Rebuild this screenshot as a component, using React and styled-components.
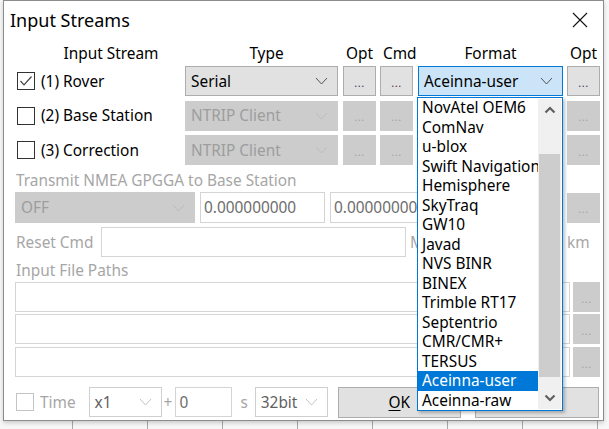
import styled, { createGlobalStyle } from "styled-components"

const GlobalStyle = createGlobalStyle`
  body {
    margin: 0;
    font-family: "Noto Sans", "Open Sans", sans-serif;
    font-size: 15.4px;
    color: #000;
  }
`

const Screen = styled.div`
  width: 609px;
  height: 429px;
  overflow: hidden;
  background-color: #f7f7f7;
  background-image: linear-gradient(to right, #a9a9a9 1px, transparent 1px);
  background-size: 75px 100%;
  background-position: 72px 0;
`

const Dialog = styled.div`
  position: relative;
  margin-left: 3px;
  width: 601px;
  height: 421px;
  box-sizing: border-box;
  border: 1px solid #8c8c8c;
  background: #fff;
  box-shadow: 0 2px 4px rgba(0, 0, 0, 0.18);
`

const TitleBar = styled.div`
  height: 38px;
  display: flex;
  align-items: center;
  justify-content: space-between;
  padding: 0 15px 0 6px;
`

const Title = styled.div`
  font-size: 18px;
`

const Body = styled.div`
  padding-left: 11px;
`

const Row = styled.div`
  display: flex;
  align-items: center;
  height: ${(p) => p.$h || 30}px;
  margin-top: ${(p) => p.$mt || 0}px;
`

const HeadCell = styled.div`
  width: ${(p) => p.$w}px;
  margin-left: ${(p) => p.$ml || 0}px;
  padding-left: ${(p) => p.$pl || 0}px;
  box-sizing: border-box;
  text-align: center;
  white-space: nowrap;
`

const StreamCell = styled.div`
  width: 170px;
  display: flex;
  align-items: center;
  gap: 6px;
  padding-left: 2px;
  box-sizing: border-box;
  white-space: nowrap;
`

const Check = styled.div`
  width: 18px;
  height: 18px;
  margin-left: ${(p) => p.$ml || 0}px;
  box-sizing: border-box;
  border: 1px solid ${(p) => (p.$off ? "#c4c4c4" : "#333")};
  background: #fff;
  display: flex;
  align-items: center;
  justify-content: center;
  flex: none;
`

const Combo = styled.div`
  width: ${(p) => p.$w}px;
  height: ${(p) => p.$h || 30}px;
  margin-left: ${(p) => p.$ml || 0}px;
  box-sizing: border-box;
  display: flex;
  align-items: center;
  justify-content: space-between;
  padding: 0 9px 0 5px;
  flex: none;
  white-space: nowrap;
  overflow: hidden;
  border: 1px solid
    ${(p) =>
      p.$focus ? "#0078d7" : p.$tone === "off" ? "#cccccc" : p.$tone === "flat" ? "#cfcfcf" : "#adadad"};
  background: ${(p) =>
    p.$focus ? "#cce4f7" : p.$tone === "off" ? "#cccccc" : p.$tone === "flat" ? "#fff" : "#e1e1e1"};
  color: ${(p) => (p.$tone === "off" ? "#9d9d9d" : p.$tone === "flat" ? "#5f5f5f" : "#000")};
`

const Dots = styled.div`
  width: ${(p) => p.$w || 33}px;
  height: ${(p) => p.$h || 30}px;
  margin-left: ${(p) => p.$ml || 0}px;
  box-sizing: border-box;
  flex: none;
  display: flex;
  align-items: center;
  justify-content: center;
  font-size: 11px;
  letter-spacing: 0.5px;
  padding-top: 2px;
  border: 1px solid ${(p) => (p.$off ? "#cccccc" : "#adadad")};
  background: ${(p) => (p.$off ? "#cccccc" : "#e1e1e1")};
  color: ${(p) => (p.$off ? "#a3a3a3" : "#4a2a55")};
`

const Edit = styled.div`
  width: ${(p) => p.$w}px;
  height: ${(p) => p.$h || 30}px;
  margin-left: ${(p) => p.$ml || 0}px;
  box-sizing: border-box;
  flex: none;
  display: flex;
  align-items: center;
  padding-left: 3px;
  overflow: hidden;
  white-space: nowrap;
  border: 1px solid #d4d4d4;
  background: #fff;
  color: #6d6d6d;
`

const Label = styled.div`
  margin-left: ${(p) => p.$ml || 0}px;
  width: ${(p) => (p.$w ? `${p.$w}px` : "auto")};
  flex: none;
  overflow: hidden;
  white-space: nowrap;
  color: ${(p) => (p.$on ? "#000" : "#a6a6a6")};
`

const Button = styled.div`
  width: ${(p) => p.$w}px;
  height: 31px;
  margin-left: ${(p) => p.$ml || 0}px;
  box-sizing: border-box;
  flex: none;
  display: flex;
  align-items: center;
  justify-content: center;
  border: 1px solid #adadad;
  background: #e1e1e1;

  u {
    text-underline-offset: 2px;
  }
`

const Dropdown = styled.div`
  position: absolute;
  left: 413px;
  top: 96px;
  width: 146px;
  height: 314px;
  box-sizing: border-box;
  border: 1px solid #0078d7;
  background: #fff;
  display: flex;
  box-shadow: 2px 2px 3px rgba(0, 0, 0, 0.25);
`

const List = styled.div`
  flex: 1;
  min-width: 0;
  display: flex;
  flex-direction: column;
`

const Item = styled.div`
  height: 19.5px;
  line-height: 19.5px;
  padding-left: 4px;
  white-space: nowrap;
  overflow: hidden;
  background: ${(p) => (p.$sel ? "#0078d7" : "transparent")};
  color: ${(p) => (p.$sel ? "#fff" : "#000")};
`

const ScrollBar = styled.div`
  width: 23px;
  margin: 1px 1px 1px 0;
  background: #f0f0f0;
  display: flex;
  flex-direction: column;
  flex: none;
`

const ArrowBox = styled.div`
  height: 22px;
  display: flex;
  align-items: center;
  justify-content: center;
  flex: none;
`

const Track = styled.div`
  flex: 1;
  display: flex;
  flex-direction: column;
  padding: 33px 1px 10px;
`

const Thumb = styled.div`
  flex: 1;
  background: #cdcdcd;
`

const Chevron = ({ color = "#606060", w = 11, h = 6 }) => (
  <svg width={w + 2} height={h + 2} viewBox={`0 0 ${w + 2} ${h + 2}`}>
    <polyline points={`1,1 ${w / 2 + 1},${h + 1} ${w + 1},1`} fill="none" stroke={color} strokeWidth="1" />
  </svg>
)

const BoldArrow = ({ up }) => (
  <svg width="12" height="8" viewBox="0 0 12 8">
    <polyline
      points={up ? "1.5,6.5 6,2 10.5,6.5" : "1.5,1.5 6,6 10.5,1.5"}
      fill="none"
      stroke="#606060"
      strokeWidth="2.2"
    />
  </svg>
)

const formats = [
  "NovAtel OEM6",
  "ComNav",
  "u-blox",
  "Swift Navigation",
  "Hemisphere",
  "SkyTraq",
  "GW10",
  "Javad",
  "NVS BINR",
  "BINEX",
  "Trimble RT17",
  "Septentrio",
  "CMR/CMR+",
  "TERSUS",
  "Aceinna-user",
  "Aceinna-raw",
]

const streams = [
  { label: "(1) Rover", type: "Serial", on: true },
  { label: "(2) Base Station", type: "NTRIP Client", on: false },
  { label: "(3) Correction", type: "NTRIP Client", on: false },
]

const App = () => {
  return (
    <Screen>
      <GlobalStyle />
      <Dialog>
        <TitleBar>
          <Title>Input Streams</Title>
          <svg width="16" height="16" viewBox="0 0 16 16">
            <path d="M1 1 L15 15 M15 1 L1 15" stroke="#111" strokeWidth="1.1" />
          </svg>
        </TitleBar>
        <Body>
          <Row $h={20} $mt={4}>
            <HeadCell $w={170} $pl={22}>Input Stream</HeadCell>
            <HeadCell $w={153} $pl={10}>Type</HeadCell>
            <HeadCell $w={33} $ml={5}>Opt</HeadCell>
            <HeadCell $w={33} $ml={4} $pl={3}>Cmd</HeadCell>
            <HeadCell $w={145} $ml={5} $pl={0}>Format</HeadCell>
            <HeadCell $w={33} $ml={4}>Opt</HeadCell>
          </Row>
          {streams.map((s, i) => (
            <Row key={s.label} $mt={i === 0 ? 3 : 4.5}>
              <StreamCell>
                <Check>
                  {s.on && (
                    <svg width="14" height="12" viewBox="0 0 14 12">
                      <polyline points="1.5,6 5,9.8 12.5,1.5" fill="none" stroke="#444" strokeWidth="1.2" />
                    </svg>
                  )}
                </Check>
                {s.label}
              </StreamCell>
              <Combo $w={153} $tone={s.on ? "on" : "off"}>
                {s.type}
                <Chevron color={s.on ? "#555" : "#bdbdbd"} />
              </Combo>
              <Dots $ml={5} $off={!s.on}>...</Dots>
              <Dots $ml={4} $off={!s.on}>...</Dots>
              <Combo $w={145} $ml={5} $focus={s.on} $tone={s.on ? "on" : "off"}>
                {s.on ? "Aceinna-user" : ""}
                <Chevron color="#555" />
              </Combo>
              <Dots $ml={4} $off={!s.on}>...</Dots>
            </Row>
          ))}
          <Row $h={20} $mt={5}>
            <Label $ml={1}>Transmit NMEA GPGGA to Base Station</Label>
          </Row>
          <Row $h={31} $mt={2}>
            <Combo $w={180} $h={31} $tone="off">
              OFF
              <Chevron color="#bdbdbd" />
            </Combo>
            <Edit $w={125} $h={31} $ml={5}>0.000000000</Edit>
            <Edit $w={125} $h={31} $ml={5}>0.000000000</Edit>
            <Edit $w={102} $h={31} $ml={5} />
            <Dots $ml={5} $off>...</Dots>
          </Row>
          <Row $mt={4}>
            <Label $w={85} $ml={1}>Reset Cmd</Label>
            <Edit $w={305} />
            <Label $w={8} $ml={4}>Max Dist</Label>
            <Edit $w={90} $ml={54} />
            <Label $ml={5}>km</Label>
          </Row>
          <Row $h={20} $mt={3}>
            <Label $ml={1}>Input File Paths</Label>
          </Row>
          {[2, 2, 3].map((m, i) => (
            <Row key={i} $mt={m}>
              <Edit $w={555} />
              <Dots $w={27} $ml={3} $off>...</Dots>
            </Row>
          ))}
          <Row $mt={10}>
            <Check $off $ml={1} />
            <Label $ml={6}>Time</Label>
            <Combo $w={73} $ml={13} $tone="flat">
              x1
              <Chevron color="#c4c4c4" />
            </Combo>
            <Label $ml={2}>+</Label>
            <Edit $w={57} $ml={3}>0</Edit>
            <Label $ml={8}>s</Label>
            <Combo $w={73} $ml={7} $tone="flat">
              32bit
              <Chevron color="#c4c4c4" />
            </Combo>
            <Button $w={123} $ml={10}>
              <span>
                <u>O</u>K
              </span>
            </Button>
            <Button $w={124} $ml={14}>Cancel</Button>
          </Row>
        </Body>
        <Dropdown>
          <List>
            {formats.map((f) => (
              <Item key={f} $sel={f === "Aceinna-user"}>
                {f}
              </Item>
            ))}
          </List>
          <ScrollBar>
            <ArrowBox>
              <BoldArrow up />
            </ArrowBox>
            <Track>
              <Thumb />
            </Track>
            <ArrowBox>
              <BoldArrow />
            </ArrowBox>
          </ScrollBar>
        </Dropdown>
      </Dialog>
    </Screen>
  )
}

export default App
